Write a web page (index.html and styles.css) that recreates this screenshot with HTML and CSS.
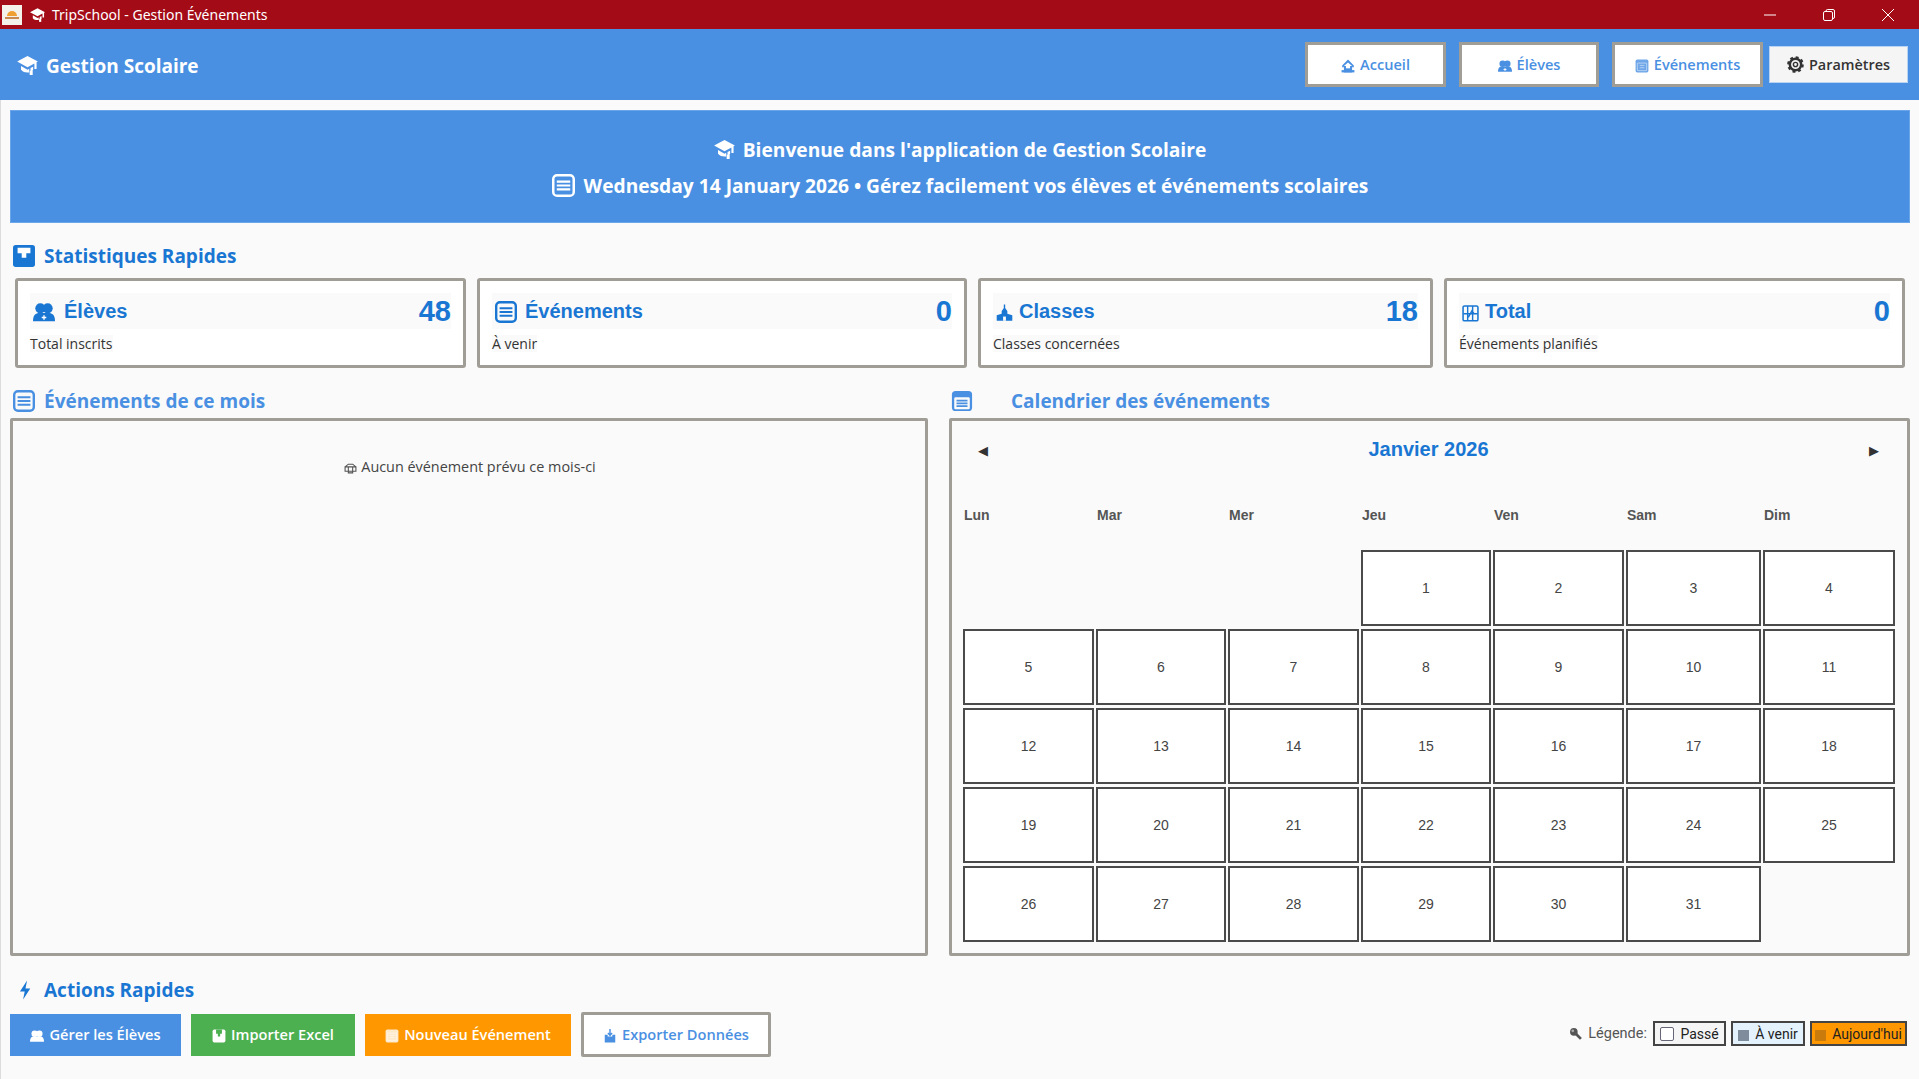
FILE: index.html
```html
<!DOCTYPE html>
<html lang="fr">
<head>
<meta charset="utf-8">
<title>TripSchool - Gestion Événements</title>
<link rel="stylesheet" href="styles.css">
</head>
<body>
<svg class="defs" width="0" height="0" aria-hidden="true">
  <symbol id="cap" viewBox="0 0 24 22"><path d="M12 0 0 6.500 12 13l8-4.300V15h2.500V7.300L24 6.500z" fill="currentColor"/><path d="M4.500 11.500V16c2.500 3 6 3.500 9.500 3v-4.200l-2 1z" fill="currentColor"/><path d="M15.500 14v4.500c1-.4 2-1 3-2.200V12.500z" fill="currentColor"/><rect x="14.500" y="17" width="3.500" height="5" fill="currentColor"/></symbol>
  <symbol id="list" viewBox="0 0 24 24"><rect x="1.300" y="1.300" width="21.400" height="21.400" rx="4" fill="none" stroke="currentColor" stroke-width="2.600"/><path d="M5 8h14M5 12h14M5 16h14" stroke="currentColor" stroke-width="2.200"/></symbol>
  <symbol id="calendar" viewBox="0 0 24 24"><path d="M5 1h14a4 4 0 0 1 4 4v14a4 4 0 0 1-4 4H5a4 4 0 0 1-4-4V5a4 4 0 0 1 4-4z" fill="currentColor"/><rect x="3.500" y="8" width="17" height="13" rx="1.500" fill="#fafafa"/><path d="M6 11.500h12M6 14.500h12M6 17.500h12" stroke="currentColor" stroke-width="2"/></symbol>
  <symbol id="stats" viewBox="0 0 24 24"><rect x="0" y="0" width="24" height="24" rx="3" fill="currentColor"/><path d="M5 3h14v6h-4.500v5h-5V9H5z" fill="#fff"/></symbol>
  <symbol id="people" viewBox="0 0 24 24"><circle cx="8" cy="8" r="5.500" fill="currentColor"/><circle cx="16" cy="8" r="5.500" fill="currentColor"/><path d="M0 22c0-7 3-9 7-9h10c4 0 7 2 7 9z" fill="currentColor"/><path d="M9.500 18h5M12 15.500v5" stroke="#fff" stroke-width="1.500"/></symbol>
  <symbol id="school" viewBox="0 0 24 24"><path d="M12 4l4 5v4l7 2v8H1v-8l7-2V9z" fill="currentColor"/><rect x="11" y="0" width="2" height="6" fill="currentColor"/><rect x="10" y="17" width="4" height="6" fill="#fafafa"/></symbol>
  <symbol id="chart" viewBox="0 0 24 24"><rect x="1.500" y="2" width="21" height="21" rx="2" fill="none" stroke="currentColor" stroke-width="2.200"/><path d="M8 2v21M15 2v21M2 13h20M9 18l5-9 3 4" fill="none" stroke="currentColor" stroke-width="2"/></symbol>
  <symbol id="bolt" viewBox="0 0 24 24"><path d="M14 0 5 14h6l-2 10 9-14h-6z" fill="currentColor"/></symbol>
  <symbol id="home" viewBox="0 0 24 24"><path d="M12 1 2 11v3h3v-2L12 6l7 6v2h3v-3z" fill="currentColor"/><path d="M5 12h14v11H5z" fill="currentColor"/><path d="M1 19h22v4H1z" fill="currentColor"/><rect x="8.500" y="11" width="7" height="5" fill="#fff"/></symbol>
  <symbol id="gear" viewBox="0 0 24 24"><circle cx="12" cy="12" r="8" fill="none" stroke="currentColor" stroke-width="3.500"/><circle cx="12" cy="12" r="10" fill="none" stroke="currentColor" stroke-width="3.500" stroke-dasharray="4 3.850"/><circle cx="12" cy="12" r="3" fill="none" stroke="currentColor" stroke-width="2"/></symbol>
  <symbol id="sheet" viewBox="0 0 24 24"><rect x="1" y="1" width="22" height="22" rx="3" fill="currentColor" fill-opacity=".8"/><rect x="4" y="7" width="16" height="13" rx="1" fill="none" stroke="#fff" stroke-opacity=".55" stroke-width="1.500"/><path d="M8 11h8M8 15h8" stroke="#fff" stroke-opacity=".55" stroke-width="1.500"/></symbol>
  <symbol id="book" viewBox="0 0 24 24"><rect x="1" y="1" width="22" height="22" rx="3" fill="currentColor"/><path d="M7 1h10v7h-3v5h-4V8H7z" fill="#4CAF50"/></symbol>
  <symbol id="export" viewBox="0 0 24 24"><path d="M3 10h5v3h8v-3h5v13H3z" fill="currentColor"/><path d="M12 0v11M8.500 7l3.500 4 3.500-4" fill="none" stroke="currentColor" stroke-width="2.500"/></symbol>
  <symbol id="inbox" viewBox="0 0 24 24"><path d="M2 9h20v8H2zM8 9v11h8V9M2 9l6-5h8l6 5" fill="none" stroke="currentColor" stroke-width="2"/></symbol>
  <symbol id="search" viewBox="0 0 24 24"><circle cx="9" cy="9" r="7" fill="currentColor"/><path d="M13 13l9 9" stroke="currentColor" stroke-width="5"/><circle cx="7" cy="7" r="2.500" fill="#fff" fill-opacity=".5"/></symbol>
</svg>

<div class="window">
  <div class="titlebar">
    <div class="app-icon"><span class="app-sun"></span><span class="app-bar"></span></div>
    <svg class="tb-cap"><use href="#cap"/></svg>
    <span class="tb-title">TripSchool - Gestion Événements</span>
    <div class="controls">
      <svg class="ctl" viewBox="0 0 12 12"><path d="M0 6h12" stroke="#fff" stroke-width="1"/></svg>
      <svg class="ctl" viewBox="0 0 12 12"><rect x=".5" y="2.500" width="9" height="9" rx="1.500" fill="none" stroke="#fff"/><path d="M3 2.500V2A1.500 1.500 0 0 1 4.500.5h5.500a1.500 1.500 0 0 1 1.500 1.500v6a1.500 1.500 0 0 1-1.500 1.500" fill="none" stroke="#fff"/></svg>
      <svg class="ctl" viewBox="0 0 12 12"><path d="M0 0l12 12M12 0 0 12" stroke="#fff" stroke-width="1"/></svg>
    </div>
  </div>

  <header class="header">
    <div class="brand"><svg class="brand-icon"><use href="#cap"/></svg>Gestion Scolaire</div>
    <nav class="nav">
      <a class="nav-btn nav-accueil"><svg class="nav-icon"><use href="#home"/></svg>Accueil</a>
      <a class="nav-btn nav-eleves"><svg class="nav-icon"><use href="#people"/></svg>Élèves</a>
      <a class="nav-btn nav-events"><svg class="nav-icon"><use href="#sheet"/></svg>Événements</a>
      <a class="nav-settings"><svg class="gear-icon"><use href="#gear"/></svg>Paramètres</a>
    </nav>
  </header>

  <main class="main">
    <section class="banner">
      <p class="banner-line"><svg class="banner-cap"><use href="#cap"/></svg>Bienvenue dans l'application de Gestion Scolaire</p>
      <p class="banner-line"><svg class="banner-list"><use href="#list"/></svg>Wednesday 14 January 2026 • Gérez facilement vos élèves et événements scolaires</p>
    </section>

    <h2 class="section-title"><svg class="section-icon"><use href="#stats"/></svg>Statistiques Rapides</h2>
    <section class="stats">
      <article class="stat">
        <div class="stat-row"><svg class="stat-icon stat-icon-people"><use href="#people"/></svg><span class="stat-name">Élèves</span><span class="stat-value">48</span></div>
        <span class="stat-sub">Total inscrits</span>
      </article>
      <article class="stat">
        <div class="stat-row"><svg class="stat-icon stat-icon-list"><use href="#list"/></svg><span class="stat-name">Événements</span><span class="stat-value">0</span></div>
        <span class="stat-sub">À venir</span>
      </article>
      <article class="stat">
        <div class="stat-row"><svg class="stat-icon stat-icon-small"><use href="#school"/></svg><span class="stat-name">Classes</span><span class="stat-value">18</span></div>
        <span class="stat-sub">Classes concernées</span>
      </article>
      <article class="stat">
        <div class="stat-row"><svg class="stat-icon stat-icon-small"><use href="#chart"/></svg><span class="stat-name">Total</span><span class="stat-value">0</span></div>
        <span class="stat-sub">Événements planifiés</span>
      </article>
    </section>

    <section class="columns">
      <div class="column">
        <h2 class="section-title section-light"><svg class="section-icon"><use href="#list"/></svg>Événements de ce mois</h2>
        <div class="panel panel-events"><p class="empty"><svg class="empty-icon"><use href="#inbox"/></svg>Aucun événement prévu ce mois-ci</p></div>
      </div>
      <div class="column">
        <h2 class="section-title section-light section-cal"><svg class="section-icon"><use href="#calendar"/></svg>Calendrier des événements</h2>
        <div class="panel panel-cal">
          <div class="cal-head"><span class="cal-arrow">◀</span><span class="cal-month">Janvier 2026</span><span class="cal-arrow">▶</span></div>
          <div class="cal-grid">
            <span class="day">Lun</span><span class="day">Mar</span><span class="day">Mer</span><span class="day">Jeu</span><span class="day">Ven</span><span class="day">Sam</span><span class="day">Dim</span>
            <span class="cell cell-first">1</span><span class="cell">2</span><span class="cell">3</span><span class="cell">4</span>
            <span class="cell">5</span><span class="cell">6</span><span class="cell">7</span><span class="cell">8</span><span class="cell">9</span><span class="cell">10</span><span class="cell">11</span>
            <span class="cell">12</span><span class="cell">13</span><span class="cell">14</span><span class="cell">15</span><span class="cell">16</span><span class="cell">17</span><span class="cell">18</span>
            <span class="cell">19</span><span class="cell">20</span><span class="cell">21</span><span class="cell">22</span><span class="cell">23</span><span class="cell">24</span><span class="cell">25</span>
            <span class="cell">26</span><span class="cell">27</span><span class="cell">28</span><span class="cell">29</span><span class="cell">30</span><span class="cell">31</span>
          </div>
        </div>
      </div>
    </section>

    <h2 class="section-title section-actions"><svg class="section-icon"><use href="#bolt"/></svg>Actions Rapides</h2>
    <section class="actions">
      <a class="action action-blue"><svg class="action-icon"><use href="#people"/></svg>Gérer les Élèves</a>
      <a class="action action-green"><svg class="action-icon"><use href="#book"/></svg>Importer Excel</a>
      <a class="action action-orange"><svg class="action-icon"><use href="#sheet"/></svg>Nouveau Événement</a>
      <a class="action action-outline"><svg class="action-icon"><use href="#export"/></svg>Exporter Données</a>
      <div class="legend">
        <svg class="legend-icon"><use href="#search"/></svg><span class="legend-label">Légende:</span>
        <span class="chip chip-past"><i class="swatch swatch-past"></i>Passé</span>
        <span class="chip chip-next"><i class="swatch swatch-next"></i>À venir</span>
        <span class="chip chip-today"><i class="swatch swatch-today"></i>Aujourd'hui</span>
      </div>
    </section>
  </main>
</div>
</body>
</html>
```

FILE: styles.css
```css
* { box-sizing: border-box; }
html, body { margin: 0; padding: 0; }
body { background: #fafafa; font-family: "Open Sans", "Noto Sans", sans-serif; overflow: hidden; }
.defs { display: block; width: 0; height: 0; overflow: hidden; }
.window { width: 1919px; height: 1079px; display: flex; flex-direction: column; border-left: 1px solid #dcdcdc; }

.titlebar { height: 29px; margin-left: -1px; background: #a30b16; color: #fff; display: flex; align-items: center; padding-left: 2px; flex: none; }
.app-icon { width: 20px; height: 20px; background: #f4f1ea; display: flex; flex-direction: column; align-items: center; justify-content: center; gap: 1px; }
.app-sun { width: 10px; height: 5px; border-radius: 5px 5px 0 0; background: #f0a030; }
.app-bar { width: 14px; height: 2px; background: #c98a50; }
.tb-cap { width: 15px; height: 14px; margin-left: 8px; color: #fff; }
.tb-title { font-size: 14px; margin-left: 7px; font-family: "Noto Sans", sans-serif; }
.controls { margin-left: auto; display: flex; align-items: center; padding-right: 25px; gap: 47px; }
.ctl { width: 12px; height: 12px; display: block; }

.header { height: 71px; background: #4a90e2; display: flex; align-items: center; justify-content: space-between; padding: 0 11px 0 17px; flex: none; margin-left: -1px; }
.brand { display: flex; align-items: center; color: #fff; font-weight: 700; font-size: 19px; padding-top: 2px; }
.brand-icon { width: 21px; height: 19px; margin-right: 8px; }
.nav { display: flex; align-items: center; }
.nav-btn { height: 45px; background: #fff; border: 3px solid #a09d96; color: #4a90e2; font-size: 14.600px; font-weight: 600; display: flex; align-items: center; justify-content: center; padding-bottom: 2px; }
.nav-accueil { width: 141px; margin-right: 13px; }
.nav-eleves { width: 140px; margin-right: 13px; }
.nav-events { width: 151px; margin-right: 6px; }
.nav-icon { width: 14px; height: 14px; margin-right: 5px; margin-top: 4px; }
.nav-settings { width: 139px; height: 37px; background: #f5f5f5; border: 1px solid #b9d3f2; color: #333; font-size: 14.400px; font-weight: 600; display: flex; align-items: center; justify-content: center; }
.gear-icon { width: 17px; height: 17px; margin-right: 5px; color: #333; }

.main { flex: 1; padding: 10px 9px 0 9px; display: flex; flex-direction: column; }
.banner { height: 113px; padding-top: 1px; background: #4a90e2; border: 1px solid #6ba5ea; color: #fff; display: flex; flex-direction: column; align-items: center; justify-content: center; gap: 11px; flex: none; }
.banner-line { margin: 0; font-size: 19.200px; line-height: 25px; font-weight: 700; display: flex; align-items: center; }
.banner-cap { width: 21px; height: 19px; margin-right: 8px; }
.banner-list { width: 23px; height: 23px; margin-right: 9px; }

.section-title { margin: 21px 0 10px; height: 24px; padding-left: 3px; display: flex; align-items: center; color: #1976d2; font-size: 19px; font-weight: 700; flex: none; }
.section-icon { width: 22px; height: 22px; margin-right: 9px; flex: none; }
.section-light { color: #4a90e2; margin: 21px 0 5px; }
.section-cal { padding-left: 2px; }
.section-cal .section-icon { margin-right: 38px; }
.section-actions { margin: 22px 0 10px; }
.section-actions .section-icon { width: 19px; margin-left: 3px; margin-right: 9px; }

.stats { display: grid; grid-template-columns: 451px 490px 455px 461px; gap: 11px; padding-left: 5px; flex: none; }
.stat { height: 90px; background: #fff; border: 3px solid #a09d96; border-radius: 3px; padding: 12px; }
.stat-row { height: 36px; background: #fafafa; display: flex; align-items: center; }
.stat-icon { width: 22px; height: 22px; color: #1976d2; margin: 2px 8px 0 3px; flex: none; }
.stat-icon-people { margin-right: 9px; }
.stat-icon-list { margin-right: 8px; }
.stat-icon-small { width: 17px; height: 18px; margin: 4px 6px 0 3px; }
.stat-name { font-family: "Liberation Sans", Arial, sans-serif; font-weight: 700; font-size: 20px; color: #1976d2; }
.stat-value { margin-left: auto; font-family: "Liberation Sans", Arial, sans-serif; font-weight: 700; font-size: 29px; color: #1976d2; }
.stat-sub { display: inline-block; margin-top: 6px; background: #fafafa; font-size: 14px; line-height: 17px; color: #333; vertical-align: top; }

.columns { display: grid; grid-template-columns: 918px 961px; column-gap: 21px; flex: none; }
.column { min-width: 0; }
.panel { height: 538px; background: #fafafa; border: 3px solid #a09d96; border-radius: 2px; }
.panel-events { padding-top: 36px; }
.empty { margin: 0; display: flex; align-items: center; justify-content: center; font-size: 14.400px; color: #444; line-height: 20px; padding-left: 2px; }
.empty-icon { width: 13px; height: 13px; margin-right: 4px; margin-top: 3px; color: #555; }

.panel-cal { padding: 0 0 0 11px; }
.cal-head { height: 60px; display: flex; align-items: center; justify-content: space-between; padding: 0 28px 0 15px; }
.cal-arrow { font-family: "DejaVu Sans", sans-serif; font-size: 13px; color: #333; margin-bottom: 1px; }
.cal-month { font-family: "Liberation Sans", Arial, sans-serif; font-weight: 700; font-size: 20px; color: #1976d2; margin-bottom: 3px; }
.cal-grid { display: grid; grid-template-columns: 131px 130px 131px 130px 131px 135px 132px; grid-template-rows: 66px repeat(5, 76px); column-gap: 2px; row-gap: 3px; }
.day { font-family: "Liberation Sans", Arial, sans-serif; font-weight: 700; font-size: 14px; color: #555; display: flex; align-items: center; padding: 2px 0 0 1px; }
.cell { background: #fff; border: 2px solid #4a4a4a; display: flex; align-items: center; justify-content: center; font-family: "Liberation Sans", Arial, sans-serif; font-size: 14px; color: #444; }
.cell-first { grid-column-start: 4; }

.actions { display: flex; align-items: center; height: 45px; flex: none; }
.action { height: 42px; display: flex; align-items: center; justify-content: center; font-size: 14.600px; font-weight: 600; color: #fff; margin-right: 10px; padding-bottom: 1px; }
.action-icon { width: 14px; height: 14px; margin-right: 5px; margin-top: 4px; }
.action-blue { width: 171px; background: #4a90e2; }
.action-green { width: 164px; background: #4caf50; }
.action-orange { width: 206px; background: #ff9800; }
.action-outline { width: 190px; height: 45px; background: #fff; border: 3px solid #a09d96; color: #4a90e2; border-radius: 2px; margin-right: 0; }
.legend { margin-left: auto; margin-right: 3px; margin-bottom: 2px; display: flex; align-items: center; font-family: "Roboto", sans-serif; font-size: 14.500px; }
.legend-icon { width: 13px; height: 13px; margin-right: 6px; color: #555; }
.legend-label { color: #555; margin-right: 6px; }
.chip { height: 25px; border: 2px solid #444; display: flex; align-items: center; justify-content: center; color: #222; margin-left: 5px; font-size: 14px; }
.swatch { display: block; width: 14px; height: 14px; margin-right: 6px; border-radius: 2px; }
.chip-past { width: 73px; margin-left: 0; background: #f5f5f5; }
.swatch-past { background: #fff; border: 1px solid #667; }
.chip-next { width: 74px; background: #e3f2fd; }
.swatch-next { width: 11px; height: 11px; margin-top: 3px; background: #7f8c9c; border-radius: 0; }
.chip-today { width: 97px; background: #ff9800; }
.swatch-today { width: 11px; height: 11px; margin-top: 3px; background: #c97c0c; border-radius: 0; }
```
